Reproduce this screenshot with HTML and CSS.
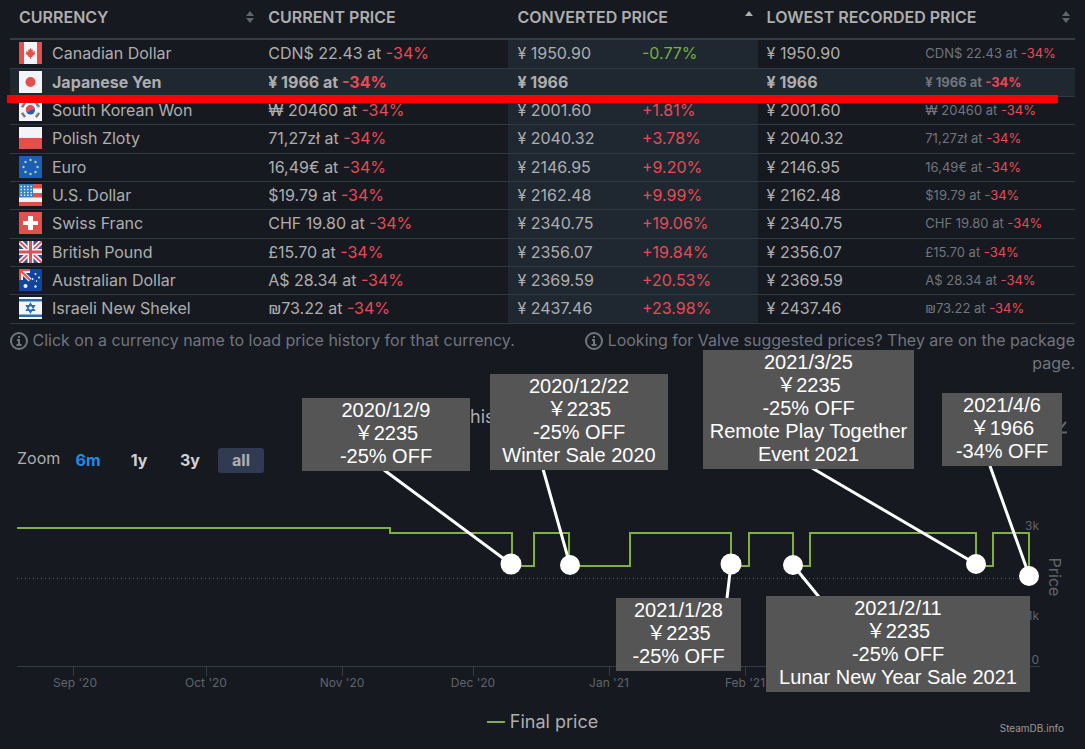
FILE: index.html
```html
<!DOCTYPE html>
<html lang="en">
<head>
<meta charset="utf-8">
<title>Price history</title>
<link rel="stylesheet" href="styles.css">
</head>
<body>
<main class="page">
<div class="prices">
<table class="table">
<colgroup><col class="c-name"><col class="c-name"><col class="c-half"><col class="c-half"><col class="c-low"><col class="c-low"></colgroup>
<thead>
<tr>
<th><button class="sort">CURRENCY<svg class="arrows" viewBox="0 0 8 14"><path d="M4 1l4 5H0zM4 13l4-5H0z"/></svg></button></th>
<th><button class="sort">CURRENT PRICE</button></th>
<th colspan="2"><button class="sort">CONVERTED PRICE<svg class="arrows arrows-active" viewBox="0 0 8 14"><path d="M4 1l4 5H0z"/></svg></button></th>
<th colspan="2"><button class="sort">LOWEST RECORDED PRICE<svg class="arrows" viewBox="0 0 8 14"><path d="M4 1l4 5H0zM4 13l4-5H0z"/></svg></button></th>
</tr>
</thead>
<tbody>
<tr><td><a class="currency" href="#cad"><svg class="flag" viewBox="0 0 23 22"><path fill="#f2f4f8" d="M0 0h23v22H0z"/><path fill="#e2504c" d="M0 0h5v22H0zM18 0h5v22h-5zM11.500 6l1.300 2 1.200-.6-.3 2.600 2.300-1-.5 2 1 .7-3 2.300.2 1H12v2h-1v-2H9.300l.2-1-3-2.300 1-.7L7 9l2.300 1L9 7.400l1.200.6z"/></svg>Canadian Dollar</a></td><td>CDN$ 22.43 at <b class="off">-34%</b></td><td class="conv">¥ 1950.90</td><td class="conv down">-0.77%</td><td>¥ 1950.90</td><td class="low">CDN$ 22.43 at <b class="off">-34%</b></td></tr>
<tr class="current"><td><a class="currency" href="#jpy"><svg class="flag" viewBox="0 0 23 22"><path fill="#f2f4fb" d="M0 0h23v22H0z"/><circle cx="11.500" cy="11" r="5" fill="#e2504c"/></svg>Japanese Yen</a></td><td>¥ 1966 at <b class="off">-34%</b></td><td class="conv">¥ 1966</td><td class="conv"></td><td>¥ 1966</td><td class="low">¥ 1966 at <b class="off">-34%</b></td></tr>
<tr><td><a class="currency" href="#krw"><svg class="flag" viewBox="0 0 23 22"><path fill="#f2f4f8" d="M0 0h23v22H0z"/><circle cx="11.500" cy="11" r="4.500" fill="#2a5eac"/><path fill="#e2504c" d="M7.500 13a4.500 4.500 0 1 1 8-4c-1 2.500-3 1-4 2s-2.500 3-4 2z"/><path stroke="#4c5058" stroke-width="2.600" stroke-dasharray="1 .4" d="M3 8l3-4M17 4l3 4M3 14l3 4M17 18l3-4"/></svg>South Korean Won</a></td><td>₩ 20460 at <b class="off">-34%</b></td><td class="conv">¥ 2001.60</td><td class="conv up">+1.81%</td><td>¥ 2001.60</td><td class="low">₩ 20460 at <b class="off">-34%</b></td></tr>
<tr><td><a class="currency" href="#pln"><svg class="flag" viewBox="0 0 23 22"><path fill="#f2f4f8" d="M0 0h23v11H0z"/><path fill="#e2504c" d="M0 11h23v11H0z"/></svg>Polish Zloty</a></td><td>71,27zł at <b class="off">-34%</b></td><td class="conv">¥ 2040.32</td><td class="conv up">+3.78%</td><td>¥ 2040.32</td><td class="low">71,27zł at <b class="off">-34%</b></td></tr>
<tr><td><a class="currency" href="#eur"><svg class="flag" viewBox="0 0 23 22"><path fill="#1c5db5" d="M0 0h23v22H0z"/><g fill="#b4d88e"><circle cx="11.500" cy="4" r="1.200"/><circle cx="16.500" cy="6" r="1.200"/><circle cx="18.500" cy="11" r="1.200"/><circle cx="16.500" cy="16" r="1.200"/><circle cx="11.500" cy="18" r="1.200"/><circle cx="6.500" cy="16" r="1.200"/><circle cx="4.500" cy="11" r="1.200"/><circle cx="6.500" cy="6" r="1.200"/></g></svg>Euro</a></td><td>16,49€ at <b class="off">-34%</b></td><td class="conv">¥ 2146.95</td><td class="conv up">+9.20%</td><td>¥ 2146.95</td><td class="low">16,49€ at <b class="off">-34%</b></td></tr>
<tr><td><a class="currency" href="#usd"><svg class="flag" viewBox="0 0 23 22"><path fill="#f2f4f8" d="M0 0h23v22H0z"/><path fill="#e2504c" d="M0 0h23v4.500H0zM0 9h23v4.500H0zM0 18h23v4H0z"/><path fill="#2f7fc4" d="M0 0h14v13H0z"/><path stroke="#e8f1fa" stroke-width="1.500" stroke-dasharray="1.500 1.800" d="M1.500 2.500h11.500M1.500 5.500h11.500M1.500 8.500h11.500M1.500 11.200h11.500"/></svg>U.S. Dollar</a></td><td>$19.79 at <b class="off">-34%</b></td><td class="conv">¥ 2162.48</td><td class="conv up">+9.99%</td><td>¥ 2162.48</td><td class="low">$19.79 at <b class="off">-34%</b></td></tr>
<tr><td><a class="currency" href="#chf"><svg class="flag" viewBox="0 0 23 22"><path fill="#e2504c" d="M0 0h23v22H0z"/><path fill="#fff" d="M9 4h5v5h5v4h-5v5H9v-5H4V9h5z"/></svg>Swiss Franc</a></td><td>CHF 19.80 at <b class="off">-34%</b></td><td class="conv">¥ 2340.75</td><td class="conv up">+19.06%</td><td>¥ 2340.75</td><td class="low">CHF 19.80 at <b class="off">-34%</b></td></tr>
<tr><td><a class="currency" href="#gbp"><svg class="flag" viewBox="0 0 23 22"><path fill="#3d4b94" d="M0 0h23v22H0z"/><path stroke="#f2f4f8" stroke-width="5" d="M0 0l23 22M23 0L0 22"/><path stroke="#dd5158" stroke-width="1.800" d="M0 0l23 22M23 0L0 22"/><path stroke="#f2f4f8" stroke-width="6" d="M11.500 0v22M0 11h23"/><path stroke="#dd5158" stroke-width="3" d="M11.500 0v22M0 11h23"/></svg>British Pound</a></td><td>£15.70 at <b class="off">-34%</b></td><td class="conv">¥ 2356.07</td><td class="conv up">+19.84%</td><td>¥ 2356.07</td><td class="low">£15.70 at <b class="off">-34%</b></td></tr>
<tr><td><a class="currency" href="#aud"><svg class="flag" viewBox="0 0 23 22"><path fill="#10459d" d="M0 0h23v22H0z"/><path stroke="#f2f4f8" stroke-width="4" d="M0 0l11 11M0 2h11M2 0v11"/><path stroke="#e2504c" stroke-width="2" d="M0 0l11 11M0 1h11M1 0v11"/><g fill="#e8f1fa"><circle cx="6.500" cy="17" r="2"/><circle cx="16.500" cy="5" r="1"/><circle cx="13.500" cy="10" r="1"/><circle cx="20" cy="8.500" r="1"/><circle cx="17.500" cy="12" r=".8"/><circle cx="16.500" cy="17.500" r="1.200"/></g></svg>Australian Dollar</a></td><td>A$ 28.34 at <b class="off">-34%</b></td><td class="conv">¥ 2369.59</td><td class="conv up">+20.53%</td><td>¥ 2369.59</td><td class="low">A$ 28.34 at <b class="off">-34%</b></td></tr>
<tr><td><a class="currency" href="#ils"><svg class="flag" viewBox="0 0 23 22"><path fill="#f2f4f8" d="M0 0h23v22H0z"/><path fill="#286cae" d="M0 2h23v2.500H0zM0 17.500h23V20H0z"/><path fill="none" stroke="#286cae" stroke-width="1.400" d="M11.500 6.500l3.900 6.700H7.600zM11.500 15.500l3.900-6.700H7.600z"/></svg>Israeli New Shekel</a></td><td>₪73.22 at <b class="off">-34%</b></td><td class="conv">¥ 2437.46</td><td class="conv up">+23.98%</td><td>¥ 2437.46</td><td class="low">₪73.22 at <b class="off">-34%</b></td></tr>
</tbody>
</table>
<div class="marker"></div>
</div>
<div class="notes">
<p class="note"><svg class="info" viewBox="0 0 18 18"><circle cx="9" cy="9" r="8"/><path d="M7 8h2v5M6.500 13h5M8 5h2"/></svg> Click on a currency name to load price history for that currency.</p>
<p class="note note-right"><svg class="info" viewBox="0 0 18 18"><circle cx="9" cy="9" r="8"/><path d="M7 8h2v5M6.500 13h5M8 5h2"/></svg> Looking for Valve suggested prices? They are on the package page.</p>
</div>
<section class="chart">
<svg class="plot" viewBox="0 375 1085 374">
<text class="title" x="470" y="423">his</text>
<path class="menu" d="M1066 422l-5 6M1060 432.500h7"/>
<path class="dots" d="M17 578.500H1040"/>
<path class="axis" d="M17 666.500H1040M73.500 667v9M206.500 667v9M342.500 667v9M473.500 667v9M609.500 667v9M745.500 667v9"/>
<g class="ticks"><text x="75" y="687">Sep '20</text><text x="206" y="687">Oct '20</text><text x="342" y="687">Nov '20</text><text x="473" y="687">Dec '20</text><text x="609" y="687">Jan '21</text><text x="745" y="687">Feb '21</text></g>
<g class="values"><text x="1039" y="530">3k</text><text x="1039" y="620">1k</text><text x="1039" y="664">0</text></g>
<text class="axis-name" transform="translate(1049 577) rotate(90)">Price</text>
<path class="price" d="M17 528H390V533H512V566H534V533H569V566H630V533H731V566H749V533H793V566H810V533H976V566H993V533H1029V575"/>
<path class="leaders" d="M384 470L511 564M543 469L570 565M812 468L976 564M990 466L1029 575M727 598L731 564M819 597L793 565"/>
<g fill="#fff"><circle cx="511" cy="564" r="10.500"/><circle cx="570" cy="565" r="10"/><circle cx="731" cy="564" r="10.500"/><circle cx="793" cy="565" r="10"/><circle cx="976" cy="564" r="10"/><circle cx="1029" cy="576" r="10"/></g>
</svg>
<div class="zoom"><span class="zoom-label">Zoom</span><button class="range range-link">6m</button><button class="range">1y</button><button class="range">3y</button><button class="range range-on">all</button></div>
<button class="legend"><span class="swatch"></span>Final price</button>
<a class="credit" href="#steamdb">SteamDB.info</a>
<div class="callout callout-a">2020/12/9<br>&#xFFE5;2235<br>-25% OFF</div>
<div class="callout callout-b">2020/12/22<br>&#xFFE5;2235<br>-25% OFF<br>Winter Sale 2020</div>
<div class="callout callout-c">2021/3/25<br>&#xFFE5;2235<br>-25% OFF<br>Remote Play Together<br>Event 2021</div>
<div class="callout callout-d">2021/4/6<br>&#xFFE5;1966<br>-34% OFF</div>
<div class="callout callout-e">2021/1/28<br>&#xFFE5;2235<br>-25% OFF</div>
<div class="callout callout-f">2021/2/11<br>&#xFFE5;2235<br>-25% OFF<br>Lunar New Year Sale 2021</div>
</section>
</main>
</body>
</html>
```
FILE: styles.css
```css
* { box-sizing: border-box; }
body { margin: 0; background: #161920; color: #aeaeae; font: 16px/23px Inter, "Noto Sans", sans-serif; }
button { padding: 0; border: 0; background: none; color: inherit; font: inherit; cursor: pointer; }
.prices { position: relative; padding: 0 10px; }
.table { width: 100%; table-layout: fixed; border-collapse: separate; border-spacing: 0; }
.c-name { width: 23.4%; }
.c-half { width: 11.7%; }
.c-low { width: 14.9%; }
th { height: 40px; padding: 0 5px 4px 9px; border-bottom: 2px solid #343c47; text-align: left; font-weight: 600; }
.sort { display: flex; width: 100%; align-items: center; justify-content: space-between; font-weight: 600; }
.arrows { width: 8px; height: 14px; fill: #60656d; }
.arrows-active { fill: #b0b0b0; }
td { height: 28px; padding: 0 0 2px 9px; border-bottom: 1px solid #303842; line-height: 20px; white-space: nowrap; }
tr:nth-child(3n+1) td { height: 29px; }
.conv { background: #1f2731; }
.current td { background: #1f2731; font-weight: 700; }
.off { color: #e44c55; font-weight: inherit; }
.up { color: #e44c55; }
.down { color: #76b041; }
.low { color: #70757e; font-size: 13px; }
.currency { display: flex; align-items: center; gap: 10px; color: inherit; text-decoration: none; }
.flag { width: 23px; height: 22px; }
.marker { position: absolute; left: 7px; right: 27px; top: 95px; height: 8px; background: #f00; }
.notes { display: flex; justify-content: space-between; padding: 5px 10px 0; color: #70757e; }
.note { margin: 0; }
.note-right { width: 46%; text-align: right; }
.info { width: 18px; height: 18px; vertical-align: -4px; fill: none; stroke: #70757e; stroke-width: 2; }
.chart { position: relative; display: grid; }
.chart > .plot, .chart > .zoom, .chart > .legend, .chart > .credit { grid-area: 1 / 1; }
.plot { display: block; width: 100%; }
.plot text { fill: #60646b; font-size: 12px; }
.plot .title { fill: #aeaeae; font-size: 18px; }
.plot .axis-name { font-size: 16px; text-anchor: middle; }
.ticks { text-anchor: middle; }
.values { text-anchor: end; }
.menu { stroke: #60646b; stroke-width: 2; }
.dots { stroke: #575c64; stroke-dasharray: 1 3; }
.axis { fill: none; stroke: #343b45; }
.price { fill: none; stroke: #80b040; stroke-width: 2; }
.leaders { fill: none; stroke: #fff; stroke-width: 3; }
.zoom { display: flex; align-self: start; justify-self: start; gap: 5px; padding: 73px 0 0 17px; }
.zoom-label { width: 43px; line-height: 20px; }
.range { width: 46px; height: 25px; border-radius: 3px; color: #d0d0d3; font-weight: 700; }
.range-link { color: #1f8ce6; }
.range-on { background: #303b51; color: #aeaeae; }
.legend { display: flex; align-self: end; justify-self: center; align-items: center; gap: 5px; margin-bottom: 16px; font-size: 18px; }
.swatch { width: 18px; height: 2px; background: #80b040; }
.credit { align-self: end; justify-self: end; margin: 0 21px 9px 0; color: #999; font-size: 10px; text-decoration: none; }
.callout { position: absolute; padding: 1px 0 3px; background: #555; color: #fff; font: 20px/23px "Liberation Sans", "Noto Sans CJK JP", sans-serif; text-align: center; white-space: nowrap; }
.callout-a { left: 302px; top: 23px; width: 168px; }
.callout-b { left: 490px; top: -1px; width: 178px; }
.callout-c { left: 703px; top: -25px; width: 211px; }
.callout-d { left: 942px; top: 18px; width: 120px; }
.callout-e { left: 616px; top: 223px; width: 125px; }
.callout-f { left: 766px; top: 221px; width: 264px; }
```
